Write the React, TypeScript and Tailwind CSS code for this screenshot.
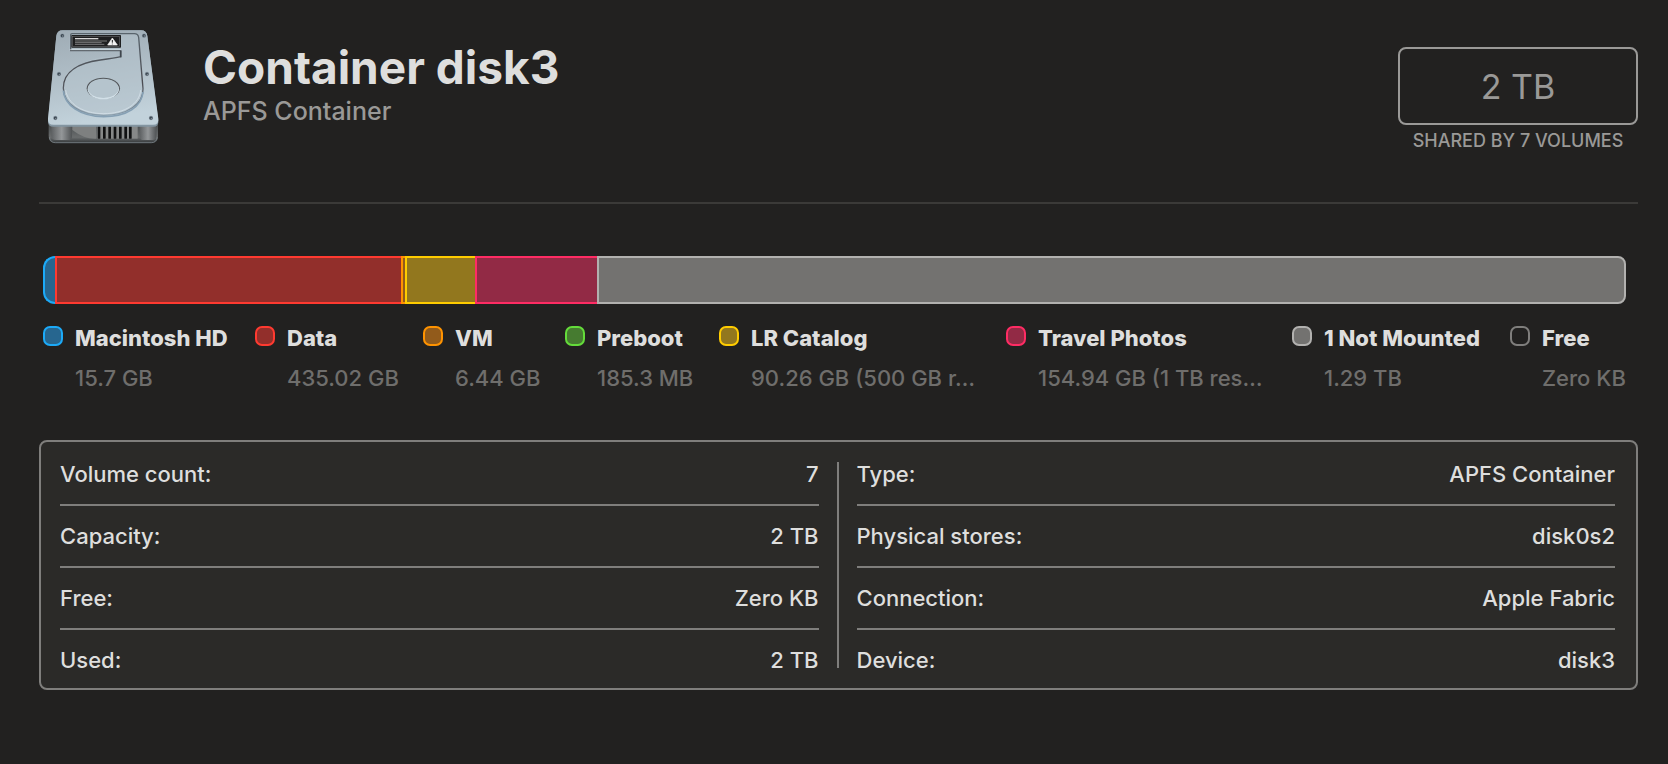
import type { ReactNode } from 'react';

const segments = [
  { name: 'Macintosh HD', size: 12, style: 'border-l-2 rounded-l-xl border-[#1caaf8] bg-[#27668f]' },
  { name: 'Data', size: 346, style: 'border-l-2 border-[#ff3a30] bg-[#922f2b]' },
  { name: 'VM', size: 4, style: 'border-l-2 border-[#ff9300] bg-[#925b1b]' },
  { name: 'LR Catalog', size: 70, style: 'border-l-2 border-[#ffcc00] bg-[#92771e]' },
  { name: 'Travel Photos', size: 122, style: 'border-l-2 border-[#ff2c64] bg-[#922a45]' },
  { name: '1 Not Mounted', size: 1029, style: 'border-x-2 rounded-r-lg border-[#b2b1af] bg-[#737270]' },
];

const total = segments.reduce((sum, s) => sum + s.size, 0);

const legend = [
  { name: 'Macintosh HD', value: '15.7 GB', swatch: 'border-[#1caaf8] bg-[#27668f]' },
  { name: 'Data', value: '435.02 GB', swatch: 'border-[#ff3a30] bg-[#922f2b]' },
  { name: 'VM', value: '6.44 GB', swatch: 'border-[#ff9300] bg-[#925b1b]' },
  { name: 'Preboot', value: '185.3 MB', swatch: 'border-[#64dc3a] bg-[#467b30]' },
  { name: 'LR Catalog', value: '90.26 GB (500 GB r…', swatch: 'border-[#ffcc00] bg-[#92771e]' },
  { name: 'Travel Photos', value: '154.94 GB (1 TB res…', swatch: 'border-[#ff2c64] bg-[#922a45]' },
  { name: '1 Not Mounted', value: '1.29 TB', swatch: 'border-[#b2b1af] bg-[#737270]' },
  { name: 'Free', value: 'Zero KB', swatch: 'border-[#7f7e7c]' },
];

const leftInfo = [
  ['Volume count:', '7'],
  ['Capacity:', '2 TB'],
  ['Free:', 'Zero KB'],
  ['Used:', '2 TB'],
];

const rightInfo = [
  ['Type:', 'APFS Container'],
  ['Physical stores:', 'disk0s2'],
  ['Connection:', 'Apple Fabric'],
  ['Device:', 'disk3'],
];

function Screw({ x, y }: { x: number; y: number }) {
  return (
    <g>
      <circle cx={x} cy={y} r="6.5" fill="#8794a0" />
      <circle cx={x} cy={y} r="4.8" fill="#3c4852" />
      <circle cx={x + 1} cy={y + 1} r="2" fill="#8d98a0" />
    </g>
  );
}

function DiskIcon() {
  return (
    <svg viewBox="0 0 342 354" className="h-[118px] w-[114px] shrink-0" aria-hidden="true">
      <defs>
        <linearGradient id="plate" x1="0" y1="0" x2="0.2" y2="1">
          <stop offset="0" stopColor="#9eabb4" />
          <stop offset="0.5" stopColor="#afbdc6" />
          <stop offset="1" stopColor="#c2d2db" />
        </linearGradient>
        <linearGradient id="base" x1="0" y1="0" x2="0" y2="1">
          <stop offset="0" stopColor="#3f4345" />
          <stop offset="0.75" stopColor="#696c6d" />
          <stop offset="1" stopColor="#2f3335" />
        </linearGradient>
        <linearGradient id="post" x1="0" y1="0" x2="1" y2="0">
          <stop offset="0" stopColor="#5d6062" />
          <stop offset="0.5" stopColor="#949799" />
          <stop offset="1" stopColor="#505355" />
        </linearGradient>
        <linearGradient id="groove" x1="0" y1="0" x2="0" y2="1">
          <stop offset="0" stopColor="#59646c" />
          <stop offset="0.6" stopColor="#4b4c52" />
          <stop offset="1" stopColor="#8b9fae" />
        </linearGradient>
      </defs>

      {/* base */}
      <path d="M5 268H333V318Q333 340 314 340H24Q5 340 5 318Z" fill="url(#base)" />
      <path d="M7 322Q10 338 25 338H313Q328 338 331 322" fill="none" stroke="#899299" strokeWidth="2" />
      <path d="M13 280H75V320Q75 330 62 330H28Q13 330 13 318Z" fill="url(#post)" />
      <path d="M278 280H328V318Q328 330 316 330H290Q278 330 278 320Z" fill="url(#post)" />
      <path d="M76 282H148V326Q112 328 76 300Z" fill="#7e8080" />
      <rect x="150" y="288" width="122" height="38" fill="#868888" />
      {[152, 168, 184, 200, 216, 232, 246].map((x) => (
        <rect key={x} x={x} y="288" width="8" height="38" rx="1" fill="#101112" />
      ))}

      {/* top plate */}
      <path
        d="M47 1H282Q299 1 301 18L334 272Q336 290 318 290H20Q1 290 3 272L28 18Q30 1 47 1Z"
        fill="#8395a1"
      />
      <path
        d="M47 1H282Q299 1 301 18L334 266Q336 284 318 284H20Q1 284 3 266L28 18Q30 1 47 1Z"
        fill="url(#plate)"
      />

      {/* platter groove */}
      <path
        d="M71 11H266Q275 11 277 20L290 176C292 220 252 260 170 260C95 260 49 220 49 174C49 123 100 94 165 82Q209 76 221 84V64H68V16Q68 11 71 11Z"
        fill="#b5c3cc"
        opacity="0.55"
      />
      <path
        d="M71 64V15Q71 11 75 11H262Q273 11 275 22L288 176C290 222 240 256 170 256C100 256 49 222 49 174C49 122 100 98 160 90Q205 84 221 80V62H70"
        fill="none"
        stroke="url(#groove)"
        strokeWidth="4"
      />
      <path d="M49 182C53 226 100 260 170 260C240 260 284 230 288 186" fill="none" stroke="#86a0b4" strokeWidth="5" />
      <path d="M56 180C62 222 108 251 170 251C232 251 278 222 281 180" fill="none" stroke="#dce7ee" strokeWidth="2" />
      <path d="M68 59H222" stroke="#dbe5eb" strokeWidth="2" />
      <path d="M221 62V82" stroke="#3f464d" strokeWidth="5" />

      {/* spindle */}
      <ellipse cx="169" cy="175" rx="50" ry="32" fill="#54585c" />
      <ellipse cx="169" cy="178" rx="47" ry="30" fill="#d2e0e8" />
      <ellipse cx="169" cy="175" rx="46" ry="29" fill="#b5c4cd" />

      {/* label */}
      <rect x="73" y="15" width="149" height="38" rx="2" fill="#1e1f20" />
      <rect x="77" y="19" width="141" height="30" fill="none" stroke="#77797a" strokeWidth="1.5" />
      <path d="M84 26H154" stroke="#d5d5d5" strokeWidth="4" />
      <path d="M84 33H180M84 38H164M84 43H172" stroke="#8b8c8d" strokeWidth="2.5" />
      <path d="M196 24L211 45H182Z" fill="#f2f2f2" strokeLinejoin="round" stroke="#f2f2f2" strokeWidth="2" />
      <path d="M196 30V38M196 41V43" stroke="#1e1f20" strokeWidth="3" />

      <Screw x={46} y={17} />
      <Screw x={291} y={17} />
      <Screw x={36} y={132} />
      <Screw x={300} y={132} />
      <Screw x={25} y={264} />
      <Screw x={312} y={264} />
    </svg>
  );
}

function InfoTable({ rows }: { rows: string[][] }) {
  return (
    <table className="w-full border-separate border-spacing-0">
      <tbody>
        {rows.map(([label, value], i) => {
          const last = i === rows.length - 1;
          const cell = last ? 'pt-[2px]' : 'border-b-2 border-[#7f7e7c]';
          return (
            <tr key={label} className={last ? 'h-[58px]' : 'h-[62px]'}>
              <th scope="row" className={`${cell} text-left font-[450]`}>
                {label}
              </th>
              <td className={`${cell} text-right`}>{value}</td>
            </tr>
          );
        })}
      </tbody>
    </table>
  );
}

function Panel({ children }: { children: ReactNode }) {
  return (
    <section className="mt-[42px] flex rounded-lg border-2 border-[#7f7e7c] bg-[#2b2a28] pt-[2px] pr-[21px] pl-[19px] text-[22px] font-[450]">
      {children}
    </section>
  );
}

export default function App() {
  return (
    <main className="min-h-screen bg-[#222120] pt-[30px] pr-[30px] pl-[39px] font-['Inter',sans-serif] text-[#dededd]">
      {/* Header */}
      <header className="flex items-start border-b-2 border-[#3b3a38] pb-[49px]">
        <div className="ml-2">
          <DiskIcon />
        </div>
        <div className="ml-[42px] grow pt-2">
          <h1 className="text-[46px] leading-[58px] font-bold">Container disk3</h1>
          <p className="text-[25px] leading-[30px] font-medium text-[#9a9997]">APFS Container</p>
        </div>
        <div className="w-60 pt-[17px] text-center text-[#9a9997]">
          <div className="flex h-[78px] items-center justify-center rounded-lg border-2 border-[#9a9997] text-[34px]">
            2 TB
          </div>
          <div className="mt-1 text-lg leading-6 font-medium whitespace-nowrap">SHARED BY 7 VOLUMES</div>
        </div>
      </header>

      {/* Usage bar */}
      <section className="mt-[52px] mr-3 ml-1">
        <div className="flex h-12">
          {segments.map((s) => (
            <div
              key={s.name}
              className={`border-y-2 ${s.style}`}
              style={{ width: `${(s.size / total) * 100}%` }}
            ></div>
          ))}
        </div>

        {/* Legend */}
        <ul className="mt-[22px] grid grid-cols-[212fr_168fr_142fr_154fr_287fr_286fr_218fr_116fr]">
          {legend.map((item) => (
            <li key={item.name} className="flex min-w-0 gap-3 whitespace-nowrap">
              <span className={`size-5 shrink-0 rounded-[7px] border-2 ${item.swatch}`}></span>
              <div className="text-[22px] leading-10">
                <div className="-mt-2 font-extrabold">{item.name}</div>
                <div className="font-medium text-[#6f6e6c]">{item.value}</div>
              </div>
            </li>
          ))}
        </ul>
      </section>

      {/* Details */}
      <Panel>
        <div className="flex-1">
          <InfoTable rows={leftInfo} />
        </div>
        <div className="mx-[18px] mt-[18px] mb-5 w-[2px] bg-[#7f7e7c]"></div>
        <div className="flex-1">
          <InfoTable rows={rightInfo} />
        </div>
      </Panel>
    </main>
  );
}
